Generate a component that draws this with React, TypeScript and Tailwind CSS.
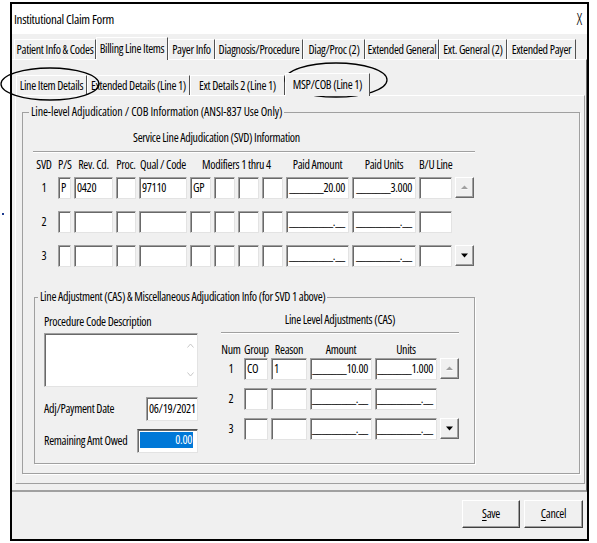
import React from "react";

const sunken =
  "bg-white border border-t-[#a0a0a0] border-l-[#a0a0a0] border-b-[#e3e3e3] border-r-[#e3e3e3] shadow-[inset_1px_1px_0_#696969]";

const svdCols =
  "grid grid-cols-[22px_13px_39px_20px_48px_21px_21px_21px_21px_63px_64px_33px_20px] gap-x-[3px]";
const casCols = "grid grid-cols-[20px_24px_36px_62px_62px_19px] gap-x-[3px]";

function Box({ value = "", className = "" }: { value?: string; className?: string }) {
  return (
    <div className={`${sunken} ${className} flex items-center pl-[2px] whitespace-nowrap`}>
      {value}
    </div>
  );
}

function Mask({ value, className = "" }: { value: string; className?: string }) {
  return (
    <div className={`${sunken} ${className} flex items-center justify-end pr-[3px]`}>
      <span className="whitespace-nowrap">{value}</span>
    </div>
  );
}

function Spin({ dir }: { dir: "up" | "down" }) {
  return (
    <div className="h-[21px] w-[19px] bg-[#f0f0f0] border border-t-white border-l-white border-b-[#696969] border-r-[#696969] shadow-[inset_-1px_-1px_0_#a0a0a0] flex items-center justify-center">
      <svg width="7" height="5" viewBox="0 0 7 5">
        {dir === "up" ? (
          <>
            <polygon points="0.5,4.5 7.5,4.5 4,1" fill="#ffffff" />
            <polygon points="0,4 7,4 3.5,0.5" fill="#a0a0a0" />
          </>
        ) : (
          <polygon points="0,0.5 7,0.5 3.5,4.5" fill="#000000" />
        )}
      </svg>
    </div>
  );
}

function Tab({ label, className = "", selected = false }: { label: string; className?: string; selected?: boolean }) {
  return (
    <div
      className={`${className} ${
        selected ? "h-[23px] -mb-px relative z-10 bg-[#f0f0f0]" : "h-[20px]"
      } border-t border-l border-r border-t-white border-l-white border-r-[#505050] flex items-center justify-center whitespace-nowrap`}
    >
      {label}
    </div>
  );
}

function Sep({ className = "" }: { className?: string }) {
  return <div className={`${className} border-t border-t-[#a0a0a0] border-b border-b-white`} />;
}

const filled = (v: string) => "_______" + v;
const empty = "_________.__";

export default function App() {
  const rows = [
    { n: "1", ps: "P", rev: "0420", proc: "", qual: "97110", m: ["GP", "", "", ""], amt: filled("20.00"), units: filled("3.000"), spin: "up" as const },
    { n: "2", ps: "", rev: "", proc: "", qual: "", m: ["", "", "", ""], amt: empty, units: empty, spin: null },
    { n: "3", ps: "", rev: "", proc: "", qual: "", m: ["", "", "", ""], amt: empty, units: empty, spin: "down" as const },
  ];
  const casRows = [
    { n: "1", g: "CO", r: "1", amt: filled("10.00"), units: filled("1.000"), spin: "up" as const },
    { n: "2", g: "", r: "", amt: empty, units: empty, spin: null },
    { n: "3", g: "", r: "", amt: empty, units: empty, spin: "down" as const },
  ];

  return (
    <div className="relative w-[597px] h-[543px] bg-white font-['Open_Sans',sans-serif] font-stretch-condensed text-[12px] leading-[16px] tracking-[-0.3px] text-black">
      <div className="absolute left-[2px] top-[213px] w-[2px] h-[2px] bg-[#1d3b8f]" />
      <div className="pl-[10px] pt-[2px]">
        <div className="w-[579px] h-[539px] border-2 border-black bg-[#f0f0f0] flex flex-col">
          {/* Title bar */}
          <div className="h-[30px] shrink-0 bg-white flex items-center justify-between pl-[2px] pr-[5px]">
            <span className="text-[13px]">Institutional Claim Form</span>
            <span className="text-[16px] font-light">X</span>
          </div>

          {/* Tab row 1 */}
          <div className="h-[25px] shrink-0 pl-[2px] flex items-end">
            <Tab label="Patient Info & Codes" className="w-[82px]" />
            <Tab label="Billing Line Items" className="w-[72px]" selected />
            <Tab label="Payer Info" className="w-[47px]" />
            <Tab label="Diagnosis/Procedure" className="w-[88px]" />
            <Tab label="Diag/Proc (2)" className="w-[62px]" />
            <Tab label="Extended General" className="w-[74px]" />
            <Tab label="Ext. General (2)" className="w-[68px]" />
            <Tab label="Extended Payer" className="w-[69px]" />
          </div>

          {/* Tab 1 panel */}
          <div className="h-[433px] shrink-0 border-t border-t-white border-r border-r-[#696969] border-b-2 border-b-[#a0a0a0] pl-[3px] pr-px pt-[13px] flex flex-col">
            {/* Tab row 2 */}
            <div className="h-[22px] shrink-0 pl-px flex items-end">
              <Tab label="Line Item Details" className="w-[71px]" />
              <Tab label="Extended Details (Line 1)" className="w-[103px]" />
              <Tab label="Ext Details 2 (Line 1)" className="w-[95px]" />
              <Tab label="MSP/COB (Line 1)" className="w-[85px]" selected />
            </div>

            {/* Tab 2 panel */}
            <div className="h-[389px] shrink-0 border border-t-white border-l-white border-r-[#a0a0a0] border-b-[#a0a0a0] pl-[6px] pt-[16px]">
              {/* Group box */}
              <div className="relative w-[558px] h-[362px] border border-[#a0a0a0] shadow-[1px_1px_0_#ffffff] pl-[10px] pt-[17px] flex flex-col">
                <span className="absolute -top-[9px] left-[6px] px-[2px] bg-[#f0f0f0] whitespace-nowrap tracking-[-0.1px]">
                  Line-level Adjudication / COB Information (ANSI-837 Use Only)
                </span>

                <div className="h-[16px] pl-[100px] whitespace-nowrap">Service Line Adjudication (SVD) Information</div>
                <Sep className="mt-[5px] w-[442px]" />

                <div className={`${svdCols} mt-[4px] h-[16px] text-center whitespace-nowrap`}>
                  <span>SVD</span>
                  <span>P/S</span>
                  <span>Rev. Cd.</span>
                  <span>Proc.</span>
                  <span>Qual / Code</span>
                  <span className="col-span-4">Modifiers 1 thru 4</span>
                  <span>Paid Amount</span>
                  <span>Paid Units</span>
                  <span>B/U Line</span>
                  <span />
                </div>

                {rows.map((r, i) => (
                  <div key={i} className={`${svdCols} ${i === 0 ? "mt-[4px]" : "mt-[12px]"} h-[22px]`}>
                    <span className="flex items-center justify-center">{r.n}</span>
                    <Box value={r.ps} />
                    <Box value={r.rev} />
                    <Box value={r.proc} />
                    <Box value={r.qual} />
                    {r.m.map((m, j) => (
                      <Box key={j} value={m} />
                    ))}
                    <Mask value={r.amt} />
                    <Mask value={r.units} />
                    <Box />
                    <div className="flex items-start">{r.spin && <Spin dir={r.spin} />}</div>
                  </div>
                ))}

                {/* CAS group */}
                <div className="relative mt-[30px] ml-px w-[441px] h-[167px] shrink-0 border border-[#a0a0a0] shadow-[1px_1px_0_#ffffff] pl-[9px] flex gap-[23px]">
                  <span className="absolute -top-[9px] left-[3px] px-[2px] bg-[#f0f0f0] whitespace-nowrap">
                    Line Adjustment (CAS) &amp; Miscellaneous Adjudication Info (for SVD 1 above)
                  </span>

                  {/* left column */}
                  <div className="w-[154px] pt-[16px] flex flex-col">
                    <div className="h-[16px] whitespace-nowrap">Procedure Code Description</div>
                    <div className={`${sunken} mt-[3px] h-[54px] flex justify-end pr-[3px]`}>
                      <div className="flex flex-col justify-between py-[9px]">
                        <svg width="7" height="5" viewBox="0 0 7 5">
                          <polyline points="0.5,4.5 3.5,1 6.5,4.5" fill="none" stroke="#c8c8c8" strokeWidth="1" />
                        </svg>
                        <svg width="7" height="5" viewBox="0 0 7 5">
                          <polyline points="0.5,0.5 3.5,4 6.5,0.5" fill="none" stroke="#c8c8c8" strokeWidth="1" />
                        </svg>
                      </div>
                    </div>
                    <div className="mt-[10px] h-[24px] flex items-center justify-between">
                      <span className="whitespace-nowrap">Adj/Payment Date</span>
                      <Box value="06/19/2021" className="w-[52px] h-[24px]" />
                    </div>
                    <div className="mt-[8px] h-[24px] flex items-center justify-between">
                      <span className="whitespace-nowrap">Remaining Amt Owed</span>
                      <div className="w-[61px] h-[24px] bg-white border border-t-[#505050] border-l-[#a0a0a0] border-b-[#e3e3e3] border-r-[#e3e3e3] shadow-[inset_1px_1px_0_#696969] pl-[2px] pr-[4px] pt-[2px]">
                        <div className="h-[16px] bg-[#0078d7] text-white text-right pr-px leading-[16px]">0.00</div>
                      </div>
                    </div>
                  </div>

                  {/* right column */}
                  <div className="w-[238px] pt-[14px] flex flex-col">
                    <div className="h-[16px] text-center whitespace-nowrap">Line Level Adjustments (CAS)</div>
                    <Sep className="mt-[4px] w-[238px]" />
                    <div className={`${casCols} mt-[8px] h-[16px] text-center whitespace-nowrap`}>
                      <span>Num</span>
                      <span>Group</span>
                      <span>Reason</span>
                      <span>Amount</span>
                      <span>Units</span>
                      <span />
                    </div>
                    {casRows.map((r, i) => (
                      <div key={i} className={`${casCols} ${i === 0 ? "mt-0" : "mt-[8px]"} h-[22px]`}>
                        <span className="flex items-center justify-center">{r.n}</span>
                        <Box value={r.g} />
                        <Box value={r.r} />
                        <Mask value={r.amt} />
                        <Mask value={r.units} />
                        <div className="flex items-start">{r.spin && <Spin dir={r.spin} />}</div>
                      </div>
                    ))}
                  </div>
                </div>
              </div>
            </div>
          </div>

          {/* Button bar */}
          <div className="flex-1 flex justify-end items-start gap-[4px] pt-[8px] pr-[4px]">
            <button className="w-[58px] h-[28px] bg-[#f0f0f0] border border-t-white border-l-white border-b-[#404040] border-r-[#404040] shadow-[inset_-1px_-1px_0_#a0a0a0]">
              <span className="underline underline-offset-2">S</span>ave
            </button>
            <button className="w-[59px] h-[28px] bg-[#f0f0f0] border border-t-white border-l-white border-b-[#404040] border-r-[#404040] shadow-[inset_-1px_-1px_0_#a0a0a0]">
              <span className="underline underline-offset-2">C</span>ancel
            </button>
          </div>
        </div>
      </div>

      {/* annotation ellipses */}
      <svg className="absolute left-0 top-0 pointer-events-none" width="597" height="543">
        <ellipse cx="50" cy="84" rx="49" ry="16" fill="none" stroke="#000" strokeWidth="1.3" />
        <ellipse cx="336" cy="80" rx="51" ry="17" fill="none" stroke="#000" strokeWidth="1.3" />
      </svg>
    </div>
  );
}
